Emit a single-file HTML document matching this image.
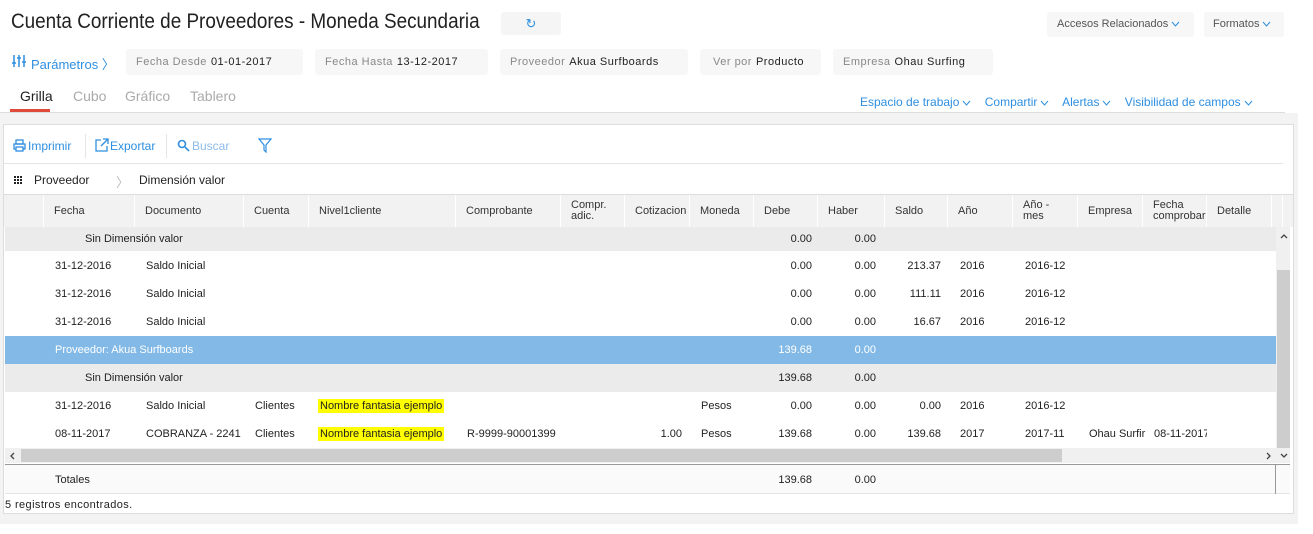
<!DOCTYPE html>
<html><head><meta charset="utf-8"><style>
*{box-sizing:border-box;margin:0;padding:0}
body{width:1313px;height:534px;background:#fff;font-family:"Liberation Sans",sans-serif;color:#222;position:relative;overflow:hidden;font-size:11px}
.a{position:absolute;white-space:nowrap}
.pill{position:absolute;background:#f7f7f7;border-radius:3px;height:26px;top:49px;font-size:11px;line-height:26px;padding-left:10px;letter-spacing:.5px}
.pill span{color:#888;margin-right:4px}
.blue{color:#2e8fe0}
.hl{background:#ffff00;padding:1px 2px}
svg.c{width:9px;height:6px;margin-left:3px;vertical-align:middle}
</style></head><body>
<div class="a" style="left:11px;top:10px;font-size:21px;color:#222;transform:scaleX(.9);transform-origin:0 0">Cuenta Corriente de Proveedores - Moneda Secundaria</div>
<div class="a" style="left:501px;top:12px;width:60px;height:23px;background:#f5f5f5;border-radius:3px;text-align:center;line-height:23px;color:#2e8fe0;font-size:13px">↻</div>
<div class="a" style="left:1047px;top:12px;width:147px;height:25px;background:#f7f7f7;border-radius:3px;line-height:25px;padding-left:10px;color:#555">Accesos Relacionados<svg class="c" viewBox="0 0 9 6"><path d="M1 1l3.5 4L8 1" stroke="#2e8fe0" fill="none"/></svg></div>
<div class="a" style="left:1204px;top:12px;width:80px;height:25px;background:#f7f7f7;border-radius:3px;line-height:25px;padding-left:9px;color:#555">Formatos<svg class="c" viewBox="0 0 9 6"><path d="M1 1l3.5 4L8 1" stroke="#2e8fe0" fill="none"/></svg></div>
<svg class="a" style="left:12px;top:54px" width="14" height="14" viewBox="0 0 14 14"><g stroke="#2e8fe0" stroke-width="1.5"><path d="M2 1v12M7 1v12M12 1v12"/><path d="M0 9h4M5 4h4M10 8h4"/></g></svg>
<div class="a blue" style="left:31px;top:54px;font-size:13px">Parámetros 〉</div>
<div class="pill" style="left:126px;width:177px"><span>Fecha Desde</span>01-01-2017</div>
<div class="pill" style="left:315px;width:173px"><span>Fecha Hasta</span>13-12-2017</div>
<div class="pill" style="left:500px;width:188px"><span>Proveedor</span>Akua Surfboards</div>
<div class="pill" style="left:700px;width:121px;padding-left:13px"><span>Ver por</span>Producto</div>
<div class="pill" style="left:833px;width:160px"><span>Empresa</span>Ohau Surfing</div>
<div class="a" style="left:20px;top:88px;font-size:14px;color:#222">Grilla</div>
<div class="a" style="left:10px;top:109px;width:40px;height:3px;background:#e04a3a"></div>
<div class="a" style="left:73px;top:88px;font-size:14px;color:#aaa">Cubo</div>
<div class="a" style="left:125px;top:88px;font-size:14px;color:#aaa">Gráfico</div>
<div class="a" style="left:190px;top:88px;font-size:14px;color:#aaa">Tablero</div>
<div class="a blue" style="left:860px;top:95px;font-size:12px">Espacio de trabajo<svg class="c" viewBox="0 0 9 6"><path d="M1 1l3.5 4L8 1" stroke="#2e8fe0" fill="none"/></svg>&nbsp;&nbsp;&nbsp; Compartir<svg class="c" viewBox="0 0 9 6"><path d="M1 1l3.5 4L8 1" stroke="#2e8fe0" fill="none"/></svg>&nbsp;&nbsp;&nbsp; Alertas<svg class="c" viewBox="0 0 9 6"><path d="M1 1l3.5 4L8 1" stroke="#2e8fe0" fill="none"/></svg>&nbsp;&nbsp;&nbsp; Visibilidad de campos<svg class="c" viewBox="0 0 9 6"><path d="M1 1l3.5 4L8 1" stroke="#2e8fe0" fill="none"/></svg></div>
<div class="a" style="left:0;top:112px;width:1285px;height:1px;background:#ddd"></div>
<div class="a" style="left:0;top:113px;width:1298px;height:411px;background:#f3f3f3"></div>
<div class="a" style="left:3px;top:124px;width:1291px;height:390px;background:#fff;border:1px solid #ddd"></div>
<svg class="a" style="left:13px;top:139px" width="13" height="13" viewBox="0 0 13 13"><g stroke="#2e8fe0" fill="none" stroke-width="1.3"><rect x="3" y="1" width="7" height="4"/><rect x="1" y="5" width="11" height="5"/><rect x="3" y="8" width="7" height="4" fill="#fff"/></g></svg>
<div class="a blue" style="left:28px;top:139px;font-size:12px">Imprimir</div>
<div class="a" style="left:85px;top:134px;width:1px;height:24px;background:#e5e5e5"></div>
<svg class="a" style="left:95px;top:138px" width="14" height="14" viewBox="0 0 14 14"><g stroke="#2e8fe0" fill="none" stroke-width="1.3"><path d="M6 2H1v11h11V8"/><path d="M8 1h5v5M13 1L6 8"/></g></svg>
<div class="a blue" style="left:110px;top:139px;font-size:12px">Exportar</div>
<div class="a" style="left:166px;top:134px;width:1px;height:24px;background:#e5e5e5"></div>
<svg class="a" style="left:177px;top:139px" width="13" height="13" viewBox="0 0 13 13"><g stroke="#2e8fe0" fill="none" stroke-width="1.6"><circle cx="5" cy="5" r="3.5"/><path d="M8 8l4 4"/></g></svg>
<div class="a" style="left:192px;top:139px;font-size:12px;color:#8cbbe8">Buscar</div>
<svg class="a" style="left:258px;top:138px" width="14" height="15" viewBox="0 0 14 15"><path d="M1 1h12L8 7v7L6 12V7z" stroke="#2e8fe0" fill="none" stroke-width="1.2"/></svg>
<div class="a" style="left:3px;top:163px;width:1280px;height:1px;background:#e5e5e5"></div>
<svg class="a" style="left:14px;top:176px" width="8" height="8" viewBox="0 0 8 8"><g fill="#222"><rect x="0" y="0" width="2" height="2"/><rect x="3" y="0" width="2" height="2"/><rect x="6" y="0" width="2" height="2"/><rect x="0" y="3" width="2" height="2"/><rect x="3" y="3" width="2" height="2"/><rect x="6" y="3" width="2" height="2"/><rect x="0" y="6" width="2" height="2"/><rect x="3" y="6" width="2" height="2"/><rect x="6" y="6" width="2" height="2"/></g></svg>
<div class="a" style="left:34px;top:173px;font-size:12px">Proveedor</div>
<div class="a" style="left:116px;top:172px;font-size:13px;color:#bbb">〉</div>
<div class="a" style="left:139px;top:173px;font-size:12px">Dimensión valor</div>
<div class="a" style="left:4px;top:194px;width:1289px;height:33px;background:#f2f2f2;border-top:1px solid #ddd"></div>
<div class="a" style="left:5px;top:227px;width:1271px;height:24px;background:#ebebeb"></div>
<div class="a" style="left:5px;top:336px;width:1271px;height:28px;background:#82b9e6"></div>
<div class="a" style="left:5px;top:364px;width:1271px;height:28px;background:#ebebeb"></div>
<div class="a" style="left:1276px;top:227px;width:14px;height:236px;background:#f0f0f0"></div>
<div class="a" style="left:1277px;top:270px;width:13px;height:178px;background:#cdcdcd"></div>
<svg class="a" style="left:1280px;top:233px" width="8" height="6" viewBox="0 0 8 6"><path d="M1 5l3-3 3 3" stroke="#444" fill="none" stroke-width="1.3"/></svg>
<svg class="a" style="left:1280px;top:453px" width="8" height="6" viewBox="0 0 8 6"><path d="M1 1l3 3 3-3" stroke="#444" fill="none" stroke-width="1.3"/></svg>
<div class="a" style="left:5px;top:448px;width:1271px;height:15px;background:#f0f0f0"></div>
<div class="a" style="left:21px;top:449px;width:1041px;height:13px;background:#cdcdcd"></div>
<svg class="a" style="left:9px;top:452px" width="6" height="8" viewBox="0 0 6 8"><path d="M5 1L2 4l3 3" stroke="#444" fill="none" stroke-width="1.3"/></svg>
<svg class="a" style="left:1266px;top:452px" width="6" height="8" viewBox="0 0 6 8"><path d="M1 1l3 3-3 3" stroke="#444" fill="none" stroke-width="1.3"/></svg>
<div class="a" style="left:5px;top:464px;width:1285px;height:1px;background:#999"></div>
<div class="a" style="left:5px;top:465px;width:1285px;height:29px;background:#fafafa;border-bottom:1px solid #e5e5e5"></div>
<div class="a" style="left:1275px;top:465px;width:1px;height:29px;background:#999"></div>
<div class="a" style="left:5px;top:499px;font-size:11px;letter-spacing:.4px">5 registros encontrados.</div>
<div class="a" style="left:2px;top:524px;width:1290px;height:10px;background:#fff"></div>
<div id="g" style="font-size:11px"></div>
<script>
var H=[[5,44,""],[44,135,"Fecha"],[135,244,"Documento"],[244,309,"Cuenta"],[309,456,"Nivel1cliente"],[456,561,"Comprobante"],[561,625,"Compr.<br>adic."],[625,690,"Cotizacion"],[690,754,"Moneda"],[754,818,"Debe"],[818,885,"Haber"],[885,948,"Saldo"],[948,1013,"Año"],[1013,1078,"Año -<br>mes"],[1078,1143,"Empresa"],[1143,1207,"Fecha<br>comprobar"],[1207,1272,"Detalle"],[1272,1276,""]];
var s="";
H.forEach(function(h){var two=h[2].indexOf("<br>")>=0;
s+='<div class="a" style="left:'+h[0]+'px;top:195px;width:'+(h[1]-h[0])+'px;height:32px;border-right:1px solid #fff;overflow:hidden;color:#333;padding-left:10px;line-height:'+(two?'11px;padding-top:5px':'32px')+'">'+h[2]+'</div>';});
function t(x,y,txt,right,col){return '<div class="a" style="'+(right?'right:'+(1313-x)+'px':'left:'+x+'px')+';top:'+y+'px;'+(col?'color:'+col:'')+'">'+txt+'</div>';}
s+=t(85,233,"Sin Dimensión valor")+t(812,233,"0.00",1)+t(876,233,"0.00",1);
var d=[[260,"213.37"],[288,"111.11"],[316,"16.67"]];
d.forEach(function(r){var y=r[0];s+=t(55,y,"31-12-2016")+t(146,y,"Saldo Inicial")+t(812,y,"0.00",1)+t(876,y,"0.00",1)+t(941,y,r[1],1)+t(960,y,"2016")+t(1025,y,"2016-12");});
s+=t(55,344,"Proveedor: Akua Surfboards",0,"#fff")+t(812,344,"139.68",1,"#fff")+t(876,344,"0.00",1,"#fff");
s+=t(85,372,"Sin Dimensión valor")+t(812,372,"139.68",1)+t(876,372,"0.00",1);
var y=400;s+=t(55,y,"31-12-2016")+t(146,y,"Saldo Inicial")+t(255,y,"Clientes")+t(318,y,'<span class="hl">Nombre fantasia ejemplo</span>')+t(701,y,"Pesos")+t(812,y,"0.00",1)+t(876,y,"0.00",1)+t(941,y,"0.00",1)+t(960,y,"2016")+t(1025,y,"2016-12");
y=428;s+=t(55,y,"08-11-2017")+t(146,y,"COBRANZA - 2241")+t(255,y,"Clientes")+t(318,y,'<span class="hl">Nombre fantasia ejemplo</span>')+t(467,y,"R-9999-90001399")+t(682,y,"1.00",1)+t(701,y,"Pesos")+t(812,y,"139.68",1)+t(876,y,"0.00",1)+t(941,y,"139.68",1)+t(960,y,"2017")+t(1025,y,"2017-11")+t(1089,y,"Ohau Surfir")+'<div class="a" style="left:1154px;top:428px;width:53px;overflow:hidden">08-11-2017</div>';
s+=t(55,474,"Totales")+t(812,474,"139.68",1)+t(876,474,"0.00",1);
document.getElementById("g").innerHTML=s;
</script>
</body></html>
